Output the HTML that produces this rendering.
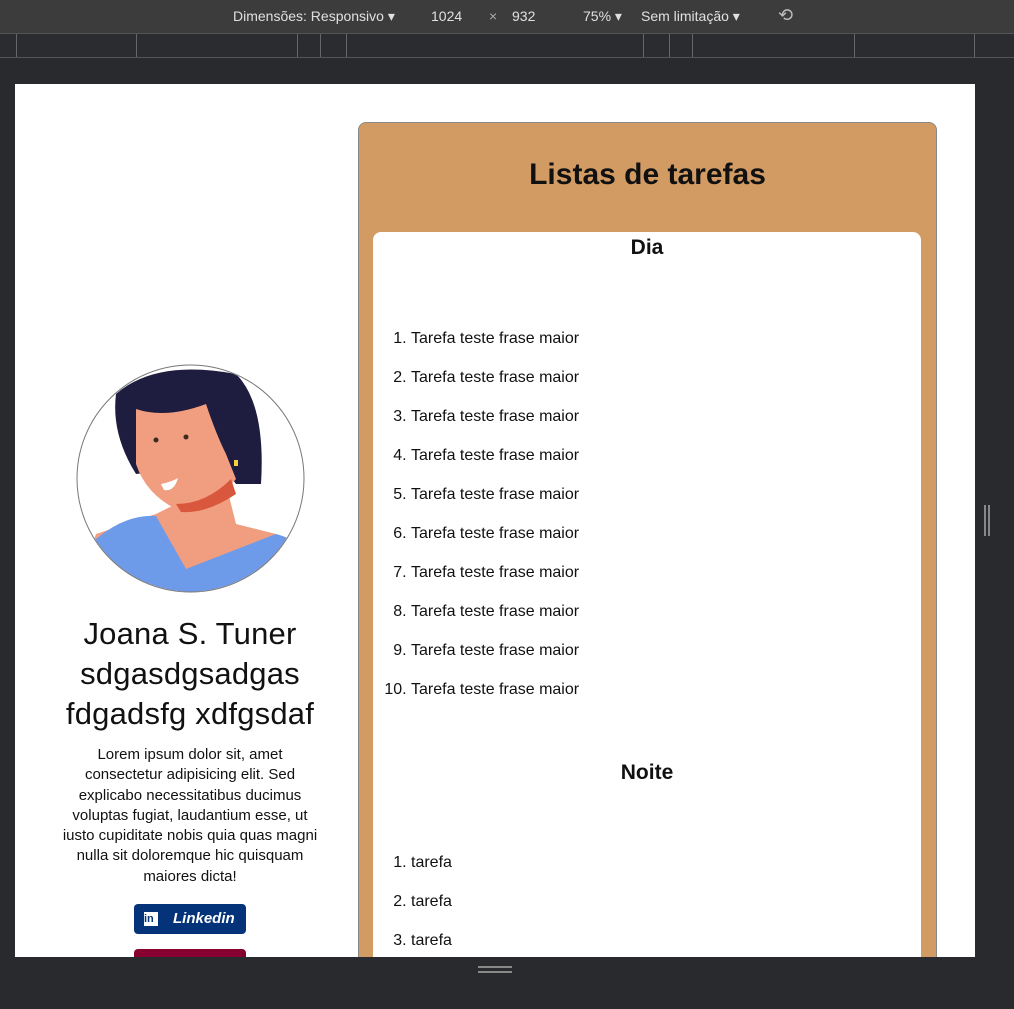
<!DOCTYPE html>
<html><head><meta charset="utf-8"><style>
*{margin:0;padding:0;box-sizing:border-box}
body{width:1014px;height:1009px;background:#292a2d;position:relative;overflow:hidden;font-family:"Liberation Sans",sans-serif}
.top{position:absolute;left:0;top:0;width:1014px;height:33px;background:#3c3c3c;color:#e0e0e0;font-size:14px}
.top span{position:absolute;top:8px}
.ruler{position:absolute;left:0;top:33px;width:1014px;height:25px;background:#2b2c2f;border-top:1px solid #555;border-bottom:1px solid #555}
.ruler i{position:absolute;top:0;width:1px;height:23px;background:#666}
.page{position:absolute;left:15px;top:84px;width:960px;height:873px;background:#fff;overflow:hidden}
.card{position:absolute;left:343px;top:38px;width:579px;height:900px;background:#d29b63;border:1px solid #888;border-radius:8px}
.card h1{position:absolute;left:0;width:100%;top:35px;text-align:center;font-size:30px;font-weight:bold;color:#111}
.inner{position:absolute;left:14px;top:109px;width:548px;height:800px;background:#fff;border-radius:8px}
.inner h2{text-align:center;font-size:21px;font-weight:bold;color:#111}
ol{font-size:16px;color:#111;padding-left:38px}
ol li{height:39px}
.left{position:absolute;left:0;width:350px;text-align:center;color:#111}
.btn{position:absolute;left:119px;width:112px;height:30px;border-radius:4px;color:#fff;font-style:italic;font-weight:bold;font-size:15px}
</style></head><body>
<div class="top">
<span style="left:233px">Dimensões: Responsivo ▾</span>
<span style="left:431px">1024</span><span style="left:489px;color:#aaa">×</span><span style="left:512px">932</span>
<span style="left:583px">75% ▾</span><span style="left:641px">Sem limitação ▾</span>
<span style="left:778px;font-size:18px;top:5px;color:#bbb">⟲</span>
</div>
<div class="ruler"><i style="left:16px"></i><i style="left:136px"></i><i style="left:297px"></i><i style="left:320px"></i><i style="left:346px"></i><i style="left:643px"></i><i style="left:669px"></i><i style="left:692px"></i><i style="left:854px"></i><i style="left:974px"></i></div>
<div class="page">
<svg style="position:absolute;left:61px;top:280px" width="229" height="229" viewBox="0 0 229 229">
<defs><clipPath id="c"><circle cx="114.5" cy="114.5" r="113"/></clipPath></defs>
<g clip-path="url(#c)">
<rect width="229" height="229" fill="#fff"/>
<path d="M40 30 Q80 -5 160 10 Q190 40 185 120 L160 120 L145 100 L60 110 Q35 70 40 30Z" fill="#1f1d3f"/>
<path d="M60 45 Q90 55 130 40 Q140 70 150 90 L160 115 Q140 140 100 145 Q70 130 60 100Z" fill="#f19d7f"/>
<path d="M100 140 L150 120 L160 160 L200 170 L229 190 L229 229 L0 229 L20 170 L80 150Z" fill="#f19d7f"/>
<path d="M0 229 L20 175 Q50 150 80 152 L110 205 L200 170 Q220 175 229 190 L229 229Z" fill="#6e9be9"/>
<path d="M100 140 Q130 140 155 115 L160 130 Q130 150 105 148Z" fill="#d8573d"/>
<path d="M85 120 Q95 118 102 114 Q98 128 88 126Z" fill="#fff"/>
<circle cx="80" cy="76" r="2.5" fill="#3a2a20"/><circle cx="110" cy="73" r="2.5" fill="#3a2a20"/>
<rect x="158" y="96" width="4" height="6" fill="#f4d03f"/>
</g>
<circle cx="114.5" cy="114.5" r="113.5" fill="none" stroke="#777" stroke-width="1"/>
</svg>
<div class="left" style="top:530px;font-size:31px;line-height:40px;letter-spacing:0.2px">Joana S. Tuner<br>sdgasdgsadgas<br>fdgadsfg xdfgsdaf</div>
<div class="left" style="top:661px;font-size:15px;line-height:20.3px;left:45px;width:260px">Lorem ipsum dolor sit, amet consectetur adipisicing elit. Sed explicabo necessitatibus ducimus voluptas fugiat, laudantium esse, ut iusto cupiditate nobis quia quas magni nulla sit doloremque hic quisquam maiores dicta!</div>
<div class="btn" style="top:820px;background:#04337a"><span style="position:absolute;left:10px;top:8px;width:14px;height:14px;background:#fff;color:#04337a;font-size:11px;font-style:normal;line-height:14px">in</span><span style="position:absolute;left:39px;top:6px">Linkedin</span></div>
<div class="btn" style="top:865px;background:#860030"></div>
<div class="card"><h1>Listas de tarefas</h1>
<div class="inner"><h2 style="margin-top:4px">Dia</h2>
<ol style="margin-top:70px"><li>Tarefa teste frase maior</li><li>Tarefa teste frase maior</li><li>Tarefa teste frase maior</li><li>Tarefa teste frase maior</li><li>Tarefa teste frase maior</li><li>Tarefa teste frase maior</li><li>Tarefa teste frase maior</li><li>Tarefa teste frase maior</li><li>Tarefa teste frase maior</li><li>Tarefa teste frase maior</li></ol>
<h2 style="margin-top:41px">Noite</h2>
<ol style="margin-top:69px"><li>tarefa</li><li>tarefa</li><li>tarefa</li></ol>
</div></div>
</div>
<div style="position:absolute;left:984px;top:505px;width:2px;height:31px;background:#888"></div><div style="position:absolute;left:988px;top:505px;width:2px;height:31px;background:#888"></div>
<div style="position:absolute;left:478px;top:966px;width:34px;height:2px;background:#888"></div><div style="position:absolute;left:478px;top:971px;width:34px;height:2px;background:#888"></div>
</body></html>
